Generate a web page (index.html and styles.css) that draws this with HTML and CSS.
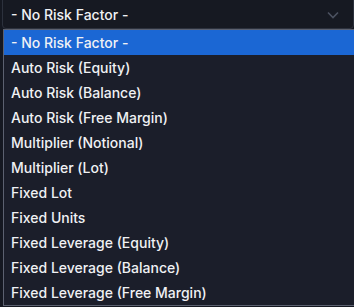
FILE: index.html
```html
<!DOCTYPE html>
<html lang="en">
<head>
  <meta charset="UTF-8" />
  <meta name="viewport" content="width=device-width, initial-scale=1.0" />
  <title>Risk Factor</title>
  <link rel="stylesheet" href="styles.css">
</head>
<body>
  <div class="select-wrap">
    <div class="select">
      <span>- No Risk Factor -</span>
      <svg class="chevron" width="12" height="8" viewBox="0 0 12 8">
        <path d="M1 1.5 L6 6.5 L11 1.5" fill="none" stroke="#4b5160" stroke-width="1.6" />
      </svg>
    </div>

    <!-- Open option list -->
    <ul class="options">
      <li class="selected">- No Risk Factor -</li>
      <li>Auto Risk (Equity)</li>
      <li>Auto Risk (Balance)</li>
      <li>Auto Risk (Free Margin)</li>
      <li>Multiplier (Notional)</li>
      <li>Multiplier (Lot)</li>
      <li>Fixed Lot</li>
      <li>Fixed Units</li>
      <li>Fixed Leverage (Equity)</li>
      <li>Fixed Leverage (Balance)</li>
      <li>Fixed Leverage (Free Margin)</li>
    </ul>
  </div>
</body>
</html>
```

FILE: styles.css
```css
body {
  margin: 0;
  background: #151821;
  font-family: "Inter", "Noto Sans", sans-serif;
  color: #f0f1f4;
  overflow: hidden;
}
.select-wrap {
  padding-left: 2px;
}
.select {
  display: flex;
  align-items: center;
  justify-content: space-between;
  height: 29px;
  padding: 1px 14px 0 8px;
  margin-top: -2px;
  border: 1px solid #2c313d;
  border-radius: 0 0 4px 4px;
  background: #161922;
  font-size: 14px;
  font-weight: 500;
  box-sizing: border-box;
  height: 31px;
}
.chevron {
  margin-top: 1px;
}
.options {
  list-style: none;
  margin: 0;
  padding: 0;
  border: 1px solid #5c6170;
  border-right: none;
  background: #1b1e2a;
  font-size: 14px;
  font-weight: 500;
  margin-left: 1px;
}
.options li {
  height: 25px;
  line-height: 26px;
  padding-left: 7px;
}
.options li.selected {
  background: #1b67d4;
}
```
